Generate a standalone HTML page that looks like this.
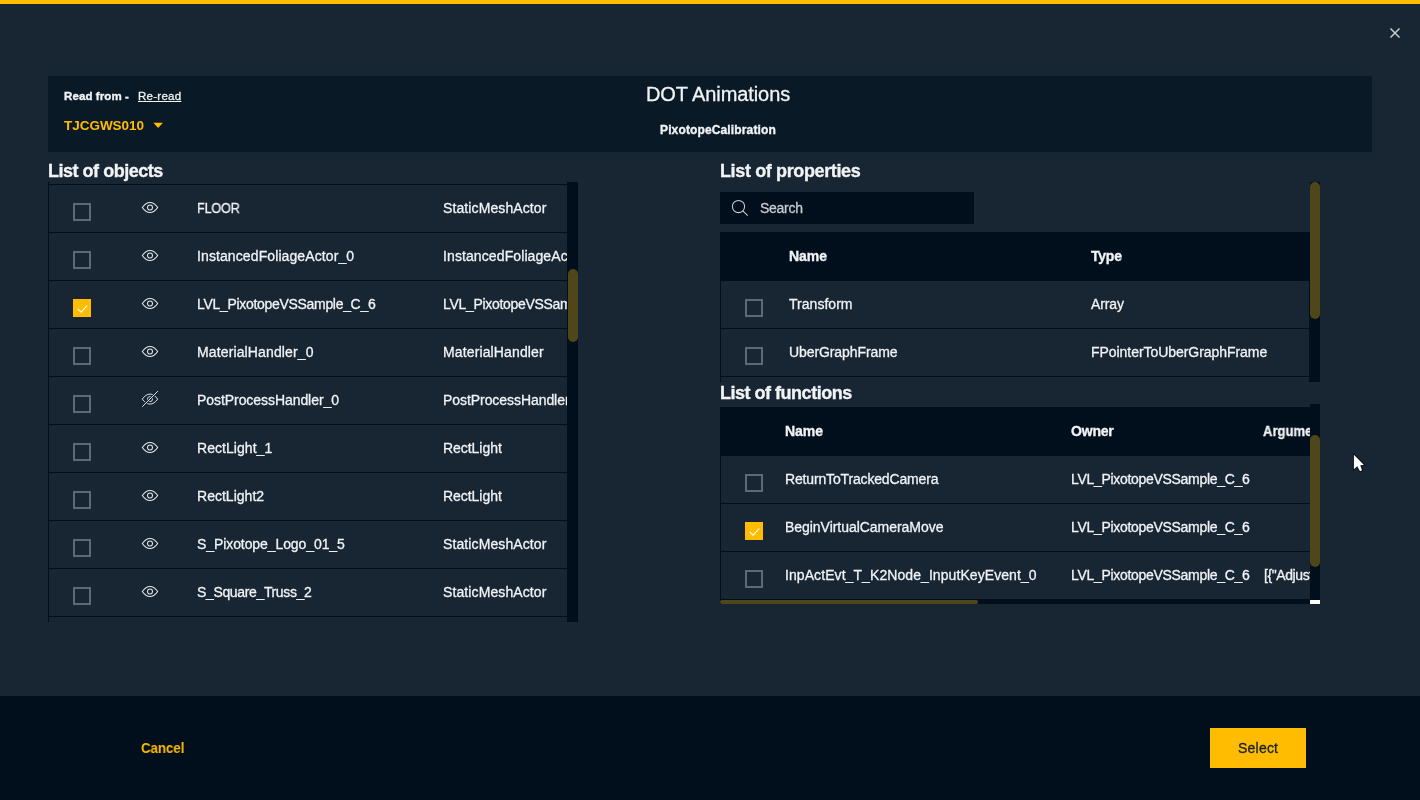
<!DOCTYPE html>
<html lang="en">
<head>
<meta charset="utf-8">
<title>DOT Animations</title>
<style>
*{box-sizing:border-box;margin:0;padding:0}
html,body{width:1420px;height:800px;overflow:hidden;background:#182532}
body{position:relative;font-family:"Liberation Sans",sans-serif;color:#f1f3f5;font-size:14px}
.abs{position:absolute}
.t{position:absolute;z-index:5;will-change:transform;white-space:nowrap;line-height:1;-webkit-text-stroke:0.3px}
.b{-webkit-text-stroke:0.35px}
.sb{-webkit-text-stroke:0}
.b{font-weight:bold}
.y{color:#ffbc00}
.ln{position:absolute;background:#010f1c;height:1px}
.cb{position:absolute;width:18px;height:18px;border:2px solid #5c6a75}
.cb.on{border:none;background:#ffbc00}
.clip{position:absolute;overflow:hidden}
.thumb{position:absolute;background:#4f4719;border-radius:5px}
svg{position:absolute;overflow:visible}
</style>
</head>
<body>
<div class="abs" style="left:0;top:0;width:1420px;height:4px;background:#ffbc00"></div>

<!-- close button -->
<svg style="left:1390px;top:28px" width="10" height="10" viewBox="0 0 10 10"><path d="M0.5 0.5 L9.5 9.5 M9.5 0.5 L0.5 9.5" stroke="#c9cdd2" stroke-width="1.5" fill="none"/></svg>

<!-- header panel -->
<div class="abs" style="left:48px;top:76px;width:1324px;height:76px;background:#0a1926"></div>
<svg style="left:153px;top:122px" width="11" height="7" viewBox="0 0 11 7"><path d="M0.4 0.8 H9.9 L5.15 6.1 Z" fill="#ffbc00"/></svg>
<div class="t b" style="left:64.20px;top:90.65px;font-size:11.5px;letter-spacing:0.100px;">Read from -</div>
<div class="t " style="left:138.20px;top:90.65px;font-size:11.5px;text-decoration:underline;text-underline-offset:1px;letter-spacing:0.258px;">Re-read</div>
<div class="t b y sb" style="left:64.20px;top:119.15px;font-size:13.5px;letter-spacing:-0.031px;">TJCGWS010</div>
<div class="t " style="left:646.10px;top:84.3px;font-size:20px;letter-spacing:-0.081px;">DOT Animations</div>
<div class="t b" style="left:660.00px;top:124px;font-size:12px;letter-spacing:0.136px;">PixotopeCalibration</div>
<div class="t b" style="left:48.40px;top:161.6px;font-size:18px;letter-spacing:-0.479px;">List of objects</div>
<div class="t b" style="left:720.30px;top:161.6px;font-size:18px;letter-spacing:-0.371px;">List of properties</div>
<div class="t b" style="left:720.20px;top:383.6px;font-size:18px;letter-spacing:-0.488px;">List of functions</div>
<div class="t " style="left:760.00px;top:201.3px;font-size:14px;color:#c6cbd0;letter-spacing:-0.270px;">Search</div>
<div class="t b y sb" style="left:140.70px;top:741.2px;font-size:14px;letter-spacing:-0.064px;transform:scaleX(0.95);transform-origin:0 50%;">Cancel</div>
<div class="t " style="left:1238.00px;top:741.2px;font-size:14px;color:#15212d;letter-spacing:0.220px;">Select</div>

<!-- list of objects -->
<div class="clip" style="left:48px;top:182px;width:519px;height:440px">
  <div class="abs" style="left:0;top:0;width:1px;height:440px;background:#010f1c"></div>
  <div class="ln" style="left:0px;top:2px;width:519px"></div>
  <div class="ln" style="left:0px;top:50px;width:519px"></div>
  <div class="ln" style="left:0px;top:98px;width:519px"></div>
  <div class="ln" style="left:0px;top:146px;width:519px"></div>
  <div class="ln" style="left:0px;top:194px;width:519px"></div>
  <div class="ln" style="left:0px;top:242px;width:519px"></div>
  <div class="ln" style="left:0px;top:290px;width:519px"></div>
  <div class="ln" style="left:0px;top:338px;width:519px"></div>
  <div class="ln" style="left:0px;top:386px;width:519px"></div>
  <div class="ln" style="left:0px;top:434px;width:519px"></div>
  <div class="cb" style="left:25px;top:21px"></div>
  <svg style="left:94px;top:17px" width="16" height="16" viewBox="0 0 16 16"><g transform="translate(0,0.5)"><path d="M0.3 8 C2.6 4.7 5.2 3 8 3 C10.8 3 13.4 4.7 15.7 8 C13.4 11.3 10.8 13 8 13 C5.2 13 2.6 11.3 0.3 8 Z" fill="none" stroke="#e4e7ea" stroke-width="1.05"/><circle cx="8" cy="8" r="2.5" fill="none" stroke="#e4e7ea" stroke-width="1.05"/></g></svg>
  <div class="t " style="left:149.20px;top:19px;font-size:14px;letter-spacing:-0.174px;transform:scaleX(0.9);transform-origin:0 50%;">FLOOR</div>
  <div class="t " style="left:395.20px;top:19px;font-size:14px;letter-spacing:0.104px;">StaticMeshActor</div>
  <div class="cb" style="left:25px;top:69px"></div>
  <svg style="left:94px;top:65px" width="16" height="16" viewBox="0 0 16 16"><g transform="translate(0,0.5)"><path d="M0.3 8 C2.6 4.7 5.2 3 8 3 C10.8 3 13.4 4.7 15.7 8 C13.4 11.3 10.8 13 8 13 C5.2 13 2.6 11.3 0.3 8 Z" fill="none" stroke="#e4e7ea" stroke-width="1.05"/><circle cx="8" cy="8" r="2.5" fill="none" stroke="#e4e7ea" stroke-width="1.05"/></g></svg>
  <div class="t " style="left:149.20px;top:67px;font-size:14px;letter-spacing:0.102px;">InstancedFoliageActor_0</div>
  <div class="t " style="left:395.20px;top:67px;font-size:14px;letter-spacing:0.102px;">InstancedFoliageActor</div>
  <div class="cb on" style="left:25px;top:117px"></div><svg style="left:25px;top:117px" width="18" height="18" viewBox="0 0 18 18"><path d="M4.7 9.8 L8.1 13.2 L14.2 6.5" fill="none" stroke="#fff" stroke-width="1.1"/></svg>
  <svg style="left:94px;top:113px" width="16" height="16" viewBox="0 0 16 16"><g transform="translate(0,0.5)"><path d="M0.3 8 C2.6 4.7 5.2 3 8 3 C10.8 3 13.4 4.7 15.7 8 C13.4 11.3 10.8 13 8 13 C5.2 13 2.6 11.3 0.3 8 Z" fill="none" stroke="#e4e7ea" stroke-width="1.05"/><circle cx="8" cy="8" r="2.5" fill="none" stroke="#e4e7ea" stroke-width="1.05"/></g></svg>
  <div class="t " style="left:149.20px;top:115px;font-size:14px;letter-spacing:-0.307px;">LVL_PixotopeVSSample_C_6</div>
  <div class="t " style="left:395.20px;top:115px;font-size:14px;letter-spacing:-0.307px;">LVL_PixotopeVSSample_C</div>
  <div class="cb" style="left:25px;top:165px"></div>
  <svg style="left:94px;top:161px" width="16" height="16" viewBox="0 0 16 16"><g transform="translate(0,0.5)"><path d="M0.3 8 C2.6 4.7 5.2 3 8 3 C10.8 3 13.4 4.7 15.7 8 C13.4 11.3 10.8 13 8 13 C5.2 13 2.6 11.3 0.3 8 Z" fill="none" stroke="#e4e7ea" stroke-width="1.05"/><circle cx="8" cy="8" r="2.5" fill="none" stroke="#e4e7ea" stroke-width="1.05"/></g></svg>
  <div class="t " style="left:149.20px;top:163px;font-size:14px;letter-spacing:0.131px;">MaterialHandler_0</div>
  <div class="t " style="left:395.20px;top:163px;font-size:14px;letter-spacing:0.129px;">MaterialHandler</div>
  <div class="cb" style="left:25px;top:213px"></div>
  <svg style="left:94px;top:209px" width="16" height="16" viewBox="0 0 16 16"><g transform="translate(0,0.1)"><path d="M0.3 8 C2.6 4.7 5.2 3 8 3 C10.8 3 13.4 4.7 15.7 8 C13.4 11.3 10.8 13 8 13 C5.2 13 2.6 11.3 0.3 8 Z" fill="none" stroke="#e4e7ea" stroke-width="0.95"/><circle cx="8" cy="8" r="2.5" fill="none" stroke="#e4e7ea" stroke-width="0.95"/></g><path d="M0.2 15.8 L15.9 0.1" stroke="#182532" stroke-width="2.4"/><path d="M0.2 15.8 L15.9 0.1" stroke="#e4e7ea" stroke-width="1"/></svg>
  <div class="t " style="left:149.20px;top:211px;font-size:14px;letter-spacing:-0.063px;">PostProcessHandler_0</div>
  <div class="t " style="left:395.20px;top:211px;font-size:14px;letter-spacing:-0.063px;">PostProcessHandler</div>
  <div class="cb" style="left:25px;top:261px"></div>
  <svg style="left:94px;top:257px" width="16" height="16" viewBox="0 0 16 16"><g transform="translate(0,0.5)"><path d="M0.3 8 C2.6 4.7 5.2 3 8 3 C10.8 3 13.4 4.7 15.7 8 C13.4 11.3 10.8 13 8 13 C5.2 13 2.6 11.3 0.3 8 Z" fill="none" stroke="#e4e7ea" stroke-width="1.05"/><circle cx="8" cy="8" r="2.5" fill="none" stroke="#e4e7ea" stroke-width="1.05"/></g></svg>
  <div class="t " style="left:149.20px;top:259px;font-size:14px;letter-spacing:0.050px;">RectLight_1</div>
  <div class="t " style="left:395.20px;top:259px;font-size:14px;letter-spacing:-0.044px;">RectLight</div>
  <div class="cb" style="left:25px;top:309px"></div>
  <svg style="left:94px;top:305px" width="16" height="16" viewBox="0 0 16 16"><g transform="translate(0,0.5)"><path d="M0.3 8 C2.6 4.7 5.2 3 8 3 C10.8 3 13.4 4.7 15.7 8 C13.4 11.3 10.8 13 8 13 C5.2 13 2.6 11.3 0.3 8 Z" fill="none" stroke="#e4e7ea" stroke-width="1.05"/><circle cx="8" cy="8" r="2.5" fill="none" stroke="#e4e7ea" stroke-width="1.05"/></g></svg>
  <div class="t " style="left:149.20px;top:307px;font-size:14px;letter-spacing:0.017px;">RectLight2</div>
  <div class="t " style="left:395.20px;top:307px;font-size:14px;letter-spacing:-0.044px;">RectLight</div>
  <div class="cb" style="left:25px;top:357px"></div>
  <svg style="left:94px;top:353px" width="16" height="16" viewBox="0 0 16 16"><g transform="translate(0,0.5)"><path d="M0.3 8 C2.6 4.7 5.2 3 8 3 C10.8 3 13.4 4.7 15.7 8 C13.4 11.3 10.8 13 8 13 C5.2 13 2.6 11.3 0.3 8 Z" fill="none" stroke="#e4e7ea" stroke-width="1.05"/><circle cx="8" cy="8" r="2.5" fill="none" stroke="#e4e7ea" stroke-width="1.05"/></g></svg>
  <div class="t " style="left:149.20px;top:355px;font-size:14px;letter-spacing:-0.087px;">S_Pixotope_Logo_01_5</div>
  <div class="t " style="left:395.20px;top:355px;font-size:14px;letter-spacing:0.104px;">StaticMeshActor</div>
  <div class="cb" style="left:25px;top:405px"></div>
  <svg style="left:94px;top:401px" width="16" height="16" viewBox="0 0 16 16"><g transform="translate(0,0.5)"><path d="M0.3 8 C2.6 4.7 5.2 3 8 3 C10.8 3 13.4 4.7 15.7 8 C13.4 11.3 10.8 13 8 13 C5.2 13 2.6 11.3 0.3 8 Z" fill="none" stroke="#e4e7ea" stroke-width="1.05"/><circle cx="8" cy="8" r="2.5" fill="none" stroke="#e4e7ea" stroke-width="1.05"/></g></svg>
  <div class="t " style="left:149.20px;top:403px;font-size:14px;letter-spacing:-0.353px;">S_Square_Truss_2</div>
  <div class="t " style="left:395.20px;top:403px;font-size:14px;letter-spacing:0.104px;">StaticMeshActor</div>
</div>
<div class="abs" style="left:567px;top:182px;width:11px;height:440px;background:#010f1c"></div>
<div class="thumb" style="left:568px;top:269px;width:10px;height:73px"></div>

<!-- search -->
<div class="abs" style="left:720px;top:192px;width:254px;height:32px;background:#010f1c"></div>
<svg style="left:731px;top:200px" width="18" height="18" viewBox="0 0 18 18"><circle cx="7.5" cy="6.5" r="6.1" stroke="#c9ced3" stroke-width="1.05" fill="none"/><path d="M11.8 10.8 L16.7 15.7" stroke="#c9ced3" stroke-width="1.05"/></svg>

<!-- list of properties -->
<div class="clip" style="left:720px;top:232px;width:589px;height:150px">
  <div class="abs" style="left:0;top:0;width:589px;height:49px;background:#010f1c"></div>
  <div class="t b" style="left:69.30px;top:17px;font-size:14px;letter-spacing:-0.050px;">Name</div>
  <div class="t b" style="left:371.30px;top:17px;font-size:14px;letter-spacing:-0.217px;">Type</div>
  <div class="ln" style="left:0px;top:96px;width:589px"></div>
  <div class="cb" style="left:25px;top:67px"></div>
  <div class="t " style="left:69.30px;top:65px;font-size:14px;letter-spacing:0.031px;">Transform</div>
  <div class="t " style="left:371.30px;top:65px;font-size:14px;letter-spacing:-0.113px;">Array</div>
  <div class="ln" style="left:0px;top:144px;width:589px"></div>
  <div class="cb" style="left:25px;top:115px"></div>
  <div class="t " style="left:69.30px;top:113px;font-size:14px;letter-spacing:-0.092px;">UberGraphFrame</div>
  <div class="t " style="left:371.30px;top:113px;font-size:14px;letter-spacing:-0.052px;">FPointerToUberGraphFrame</div>
  <div class="abs" style="left:0;top:49px;width:1px;height:101px;background:#010f1c"></div>
</div>
<div class="abs" style="left:1310px;top:182px;width:10px;height:200px;background:#010f1c"></div>
<div class="abs" style="left:1309px;top:232px;width:1px;height:150px;background:#010f1c"></div>
<div class="thumb" style="left:1310px;top:182px;width:10px;height:137px"></div>

<!-- list of functions -->
<div class="clip" style="left:720px;top:404px;width:590px;height:196px">
  <div class="abs" style="left:0;top:3px;width:590px;height:49px;background:#010f1c"></div>
  <div class="t b" style="left:65.40px;top:20px;font-size:14px;letter-spacing:-0.050px;">Name</div>
  <div class="t b" style="left:351.40px;top:20px;font-size:14px;letter-spacing:-0.188px;">Owner</div>
  <div class="t b" style="left:543.10px;top:20px;font-size:14px;letter-spacing:0.015px;transform:scaleX(0.93);transform-origin:0 50%;">Arguments</div>
  <div class="ln" style="left:0px;top:99px;width:590px"></div>
  <div class="cb" style="left:25px;top:70px"></div>
  <div class="t " style="left:65.40px;top:68px;font-size:14px;letter-spacing:-0.158px;">ReturnToTrackedCamera</div>
  <div class="t " style="left:351.40px;top:68px;font-size:14px;letter-spacing:-0.302px;">LVL_PixotopeVSSample_C_6</div>
  <div class="ln" style="left:0px;top:147px;width:590px"></div>
  <div class="cb on" style="left:25px;top:118px"></div><svg style="left:25px;top:118px" width="18" height="18" viewBox="0 0 18 18"><path d="M4.7 9.8 L8.1 13.2 L14.2 6.5" fill="none" stroke="#fff" stroke-width="1.1"/></svg>
  <div class="t " style="left:65.40px;top:116px;font-size:14px;letter-spacing:-0.040px;">BeginVirtualCameraMove</div>
  <div class="t " style="left:351.40px;top:116px;font-size:14px;letter-spacing:-0.302px;">LVL_PixotopeVSSample_C_6</div>
  <div class="ln" style="left:0px;top:195px;width:590px"></div>
  <div class="cb" style="left:25px;top:166px"></div>
  <div class="t " style="left:65.40px;top:164px;font-size:14px;letter-spacing:0.077px;">InpActEvt_T_K2Node_InputKeyEvent_0</div>
  <div class="t " style="left:351.40px;top:164px;font-size:14px;letter-spacing:-0.302px;">LVL_PixotopeVSSample_C_6</div>
  <div class="t " style="left:543.70px;top:164px;font-size:14px;letter-spacing:-0.408px;">[{&quot;AdjustValue&quot;:1}]</div>
  <div class="abs" style="left:0;top:52px;width:1px;height:144px;background:#010f1c"></div>
</div>
<div class="abs" style="left:1310px;top:404px;width:10px;height:196px;background:#010f1c"></div>
<div class="thumb" style="left:1310px;top:435px;width:10px;height:132px"></div>
<div class="abs" style="left:720px;top:600px;width:590px;height:4px;background:#010f1c"></div>
<div class="thumb" style="left:720px;top:600px;width:258px;height:4px;border-radius:2px"></div>
<div class="abs" style="left:1310px;top:600px;width:10px;height:4px;background:#fff"></div>

<!-- footer -->
<div class="abs" style="left:0;top:696px;width:1420px;height:104px;background:#010f1c"></div>
<div class="abs" style="left:1210px;top:728px;width:96px;height:40px;background:#ffbc00"></div>

<!-- mouse cursor -->
<svg style="left:1352px;top:452px" width="16" height="24" viewBox="0 0 16 24"><path d="M1.9 2.8 V17.2 L5.2 14.2 L8 19.2 L10 18.3 L8.3 13.3 L12 12.9 Z" fill="#fff" stroke="#04090f" stroke-width="1.6" stroke-linejoin="miter" paint-order="stroke"/></svg>
</body>
</html>
